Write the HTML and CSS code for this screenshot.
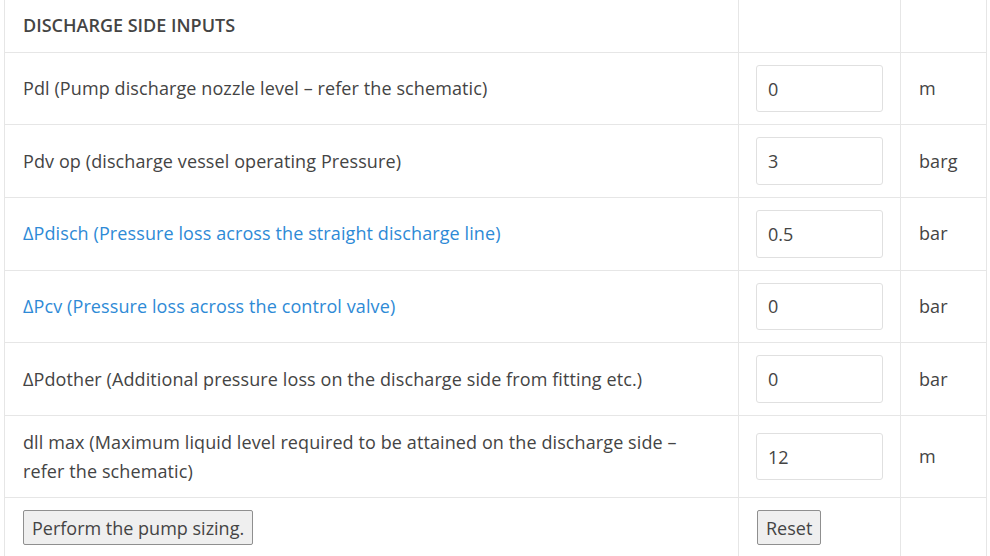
FILE: index.html
```html
<!DOCTYPE html>
<html>
<head>
<meta charset="utf-8">
<link rel="stylesheet" href="styles.css">
</head>
<body>
<div class="wrap">
<table class="inputs">
  <colgroup><col class="c-label"><col class="c-input"><col class="c-unit"></colgroup>
  <tr class="head"><td class="title">DISCHARGE SIDE INPUTS</td><td></td><td></td></tr>
  <tr><td>Pdl (Pump discharge nozzle level – refer the schematic)</td><td><input class="field" value="0"></td><td>m</td></tr>
  <tr><td>Pdv op (discharge vessel operating Pressure)</td><td><input class="field" value="3"></td><td>barg</td></tr>
  <tr><td><a class="link">ΔPdisch (Pressure loss across the straight discharge line)</a></td><td><input class="field" value="0.5"></td><td>bar</td></tr>
  <tr><td><a class="link">ΔPcv (Pressure loss across the control valve)</a></td><td><input class="field" value="0"></td><td>bar</td></tr>
  <tr><td>ΔPdother (Additional pressure loss on the discharge side from fitting etc.)</td><td><input class="field" value="0"></td><td>bar</td></tr>
  <tr><td>dll max (Maximum liquid level required to be attained on the discharge side – refer the schematic)</td><td><input class="field" value="12"></td><td>m</td></tr>
  <tr class="actions"><td><button class="btn">Perform the pump sizing.</button></td><td><button class="btn">Reset</button></td><td></td></tr>
</table>
</div>
</body>
</html>
```
FILE: styles.css
```css
html, body {
  margin: 0;
  padding: 0;
  background: #fff;
}
body {
  font-family: "Open Sans", "Liberation Sans", sans-serif;
  font-size: 18px;
  line-height: 1.6;
  letter-spacing: 0.1px;
  color: #444;
  overflow: hidden;
}
.wrap {
  padding: 0 4px 0 4px;
  margin-top: -2px;
}
.inputs {
  width: 982px;
  border-collapse: collapse;
  table-layout: fixed;
}
.c-label { width: 734px; }
.c-input { width: 162px; }
.c-unit { width: 86px; }
.inputs td {
  border: 1px solid #e6e6e6;
  padding: 12px 18px 12px 18px;
  vertical-align: middle;
}
.title {
  font-weight: 600;
  letter-spacing: 0;
  text-transform: uppercase;
}
.link {
  color: #2e8ad6;
  text-decoration: none;
}
.field {
  box-sizing: border-box;
  width: 127px;
  height: 47.6px;
  border: 1px solid #e0e0e0;
  border-radius: 3px;
  padding: 0 11px;
  font-family: inherit;
  font-size: 18px;
  color: #444;
  display: block;
  margin: 0 0 0 -1px;
}
.btn {
  font-family: inherit;
  font-size: 18px;
  letter-spacing: 0;
  color: #444;
  background: #efefef;
  border: 1px solid #8f8f8f;
  border-radius: 2px;
  height: 35px;
  padding: 0 8px;
  line-height: 1;
  display: block;
}
```
